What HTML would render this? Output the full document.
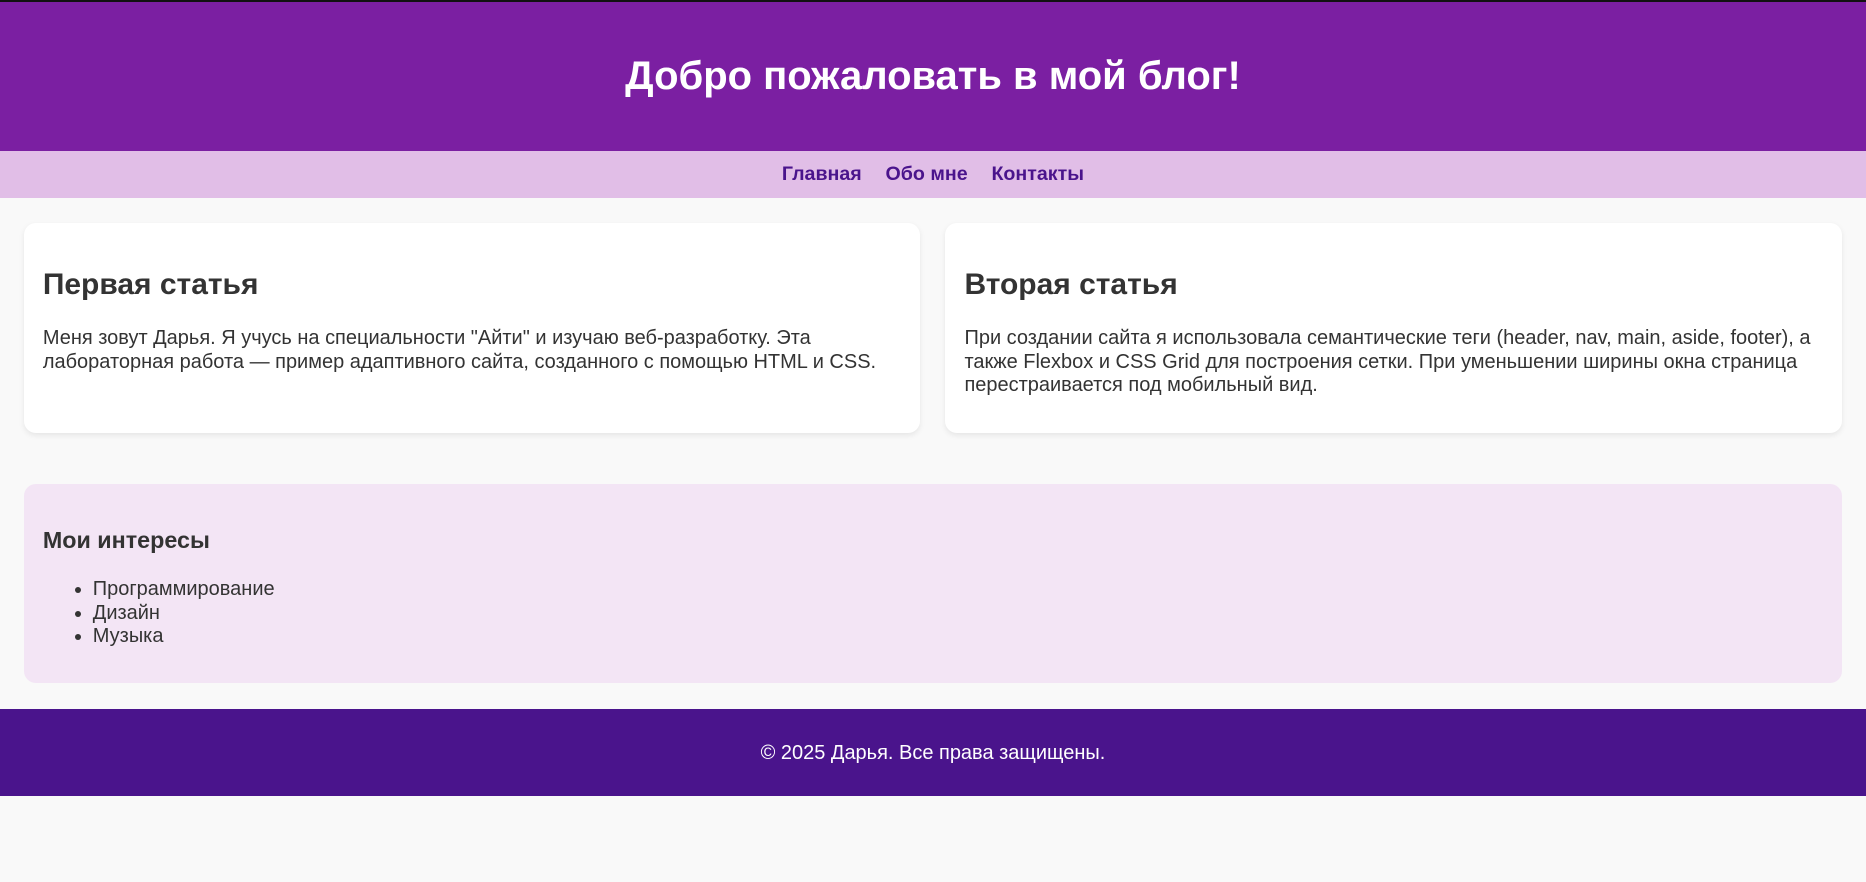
<!DOCTYPE html>
<html><head><meta charset="utf-8">
<style>
html{zoom:1.19}
body{margin:0;background:#f9f9f9;font-family:"Liberation Sans",Arial,sans-serif;color:#333;font-size:16.8px;line-height:1.19;width:1568px}
header{background:#7b1fa2;height:125px;border-top:2px solid #111;display:flex;align-items:center;justify-content:center}
header h1{color:#fff;font-size:33.6px;margin:0;margin-top:0}
nav{background:#e1bee7;height:40px;display:flex;align-items:center;justify-content:center}
nav a{color:#4a148c;font-weight:bold;text-decoration:none;margin:0 10px;font-size:16.5px}
.grid{display:grid;grid-template-columns:1fr 1fr;gap:21px;padding:21px 20px 0}
.card{background:#fff;border-radius:10px;padding:16px;box-shadow:0 2px 5px rgba(0,0,0,.08);height:144px}
.card h2{font-size:25.2px;margin:21px 0 20px}
.card p{margin:16px 0}
aside{background:#f3e5f5;border-radius:10px;margin:43px 20px 22px;padding:16px;height:135px}
aside h3{font-size:19.6px;margin:20px 0}
aside ul{margin:16px 0;padding-left:42px;line-height:1.17}
footer{background:#4a148c;color:#fff;height:73px;display:flex;align-items:center;justify-content:center;padding-top:2px;box-sizing:border-box}
</style></head><body>
<header><h1>Добро пожаловать в мой блог!</h1></header>
<nav><a>Главная</a><a>Обо мне</a><a>Контакты</a></nav>
<div class="grid">
<div class="card"><h2>Первая статья</h2><p>Меня зовут Дарья. Я учусь на специальности "Айти" и изучаю веб-разработку. Эта лабораторная работа — пример адаптивного сайта, созданного с помощью HTML и CSS.</p></div>
<div class="card"><h2>Вторая статья</h2><p>При создании сайта я использовала семантические теги (header, nav, main, aside, footer), а также Flexbox и CSS Grid для построения сетки. При уменьшении ширины окна страница перестраивается под мобильный вид.</p></div>
</div>
<aside><h3>Мои интересы</h3><ul><li>Программирование</li><li>Дизайн</li><li>Музыка</li></ul></aside>
<footer>© 2025 Дарья. Все права защищены.</footer>
</body></html>
